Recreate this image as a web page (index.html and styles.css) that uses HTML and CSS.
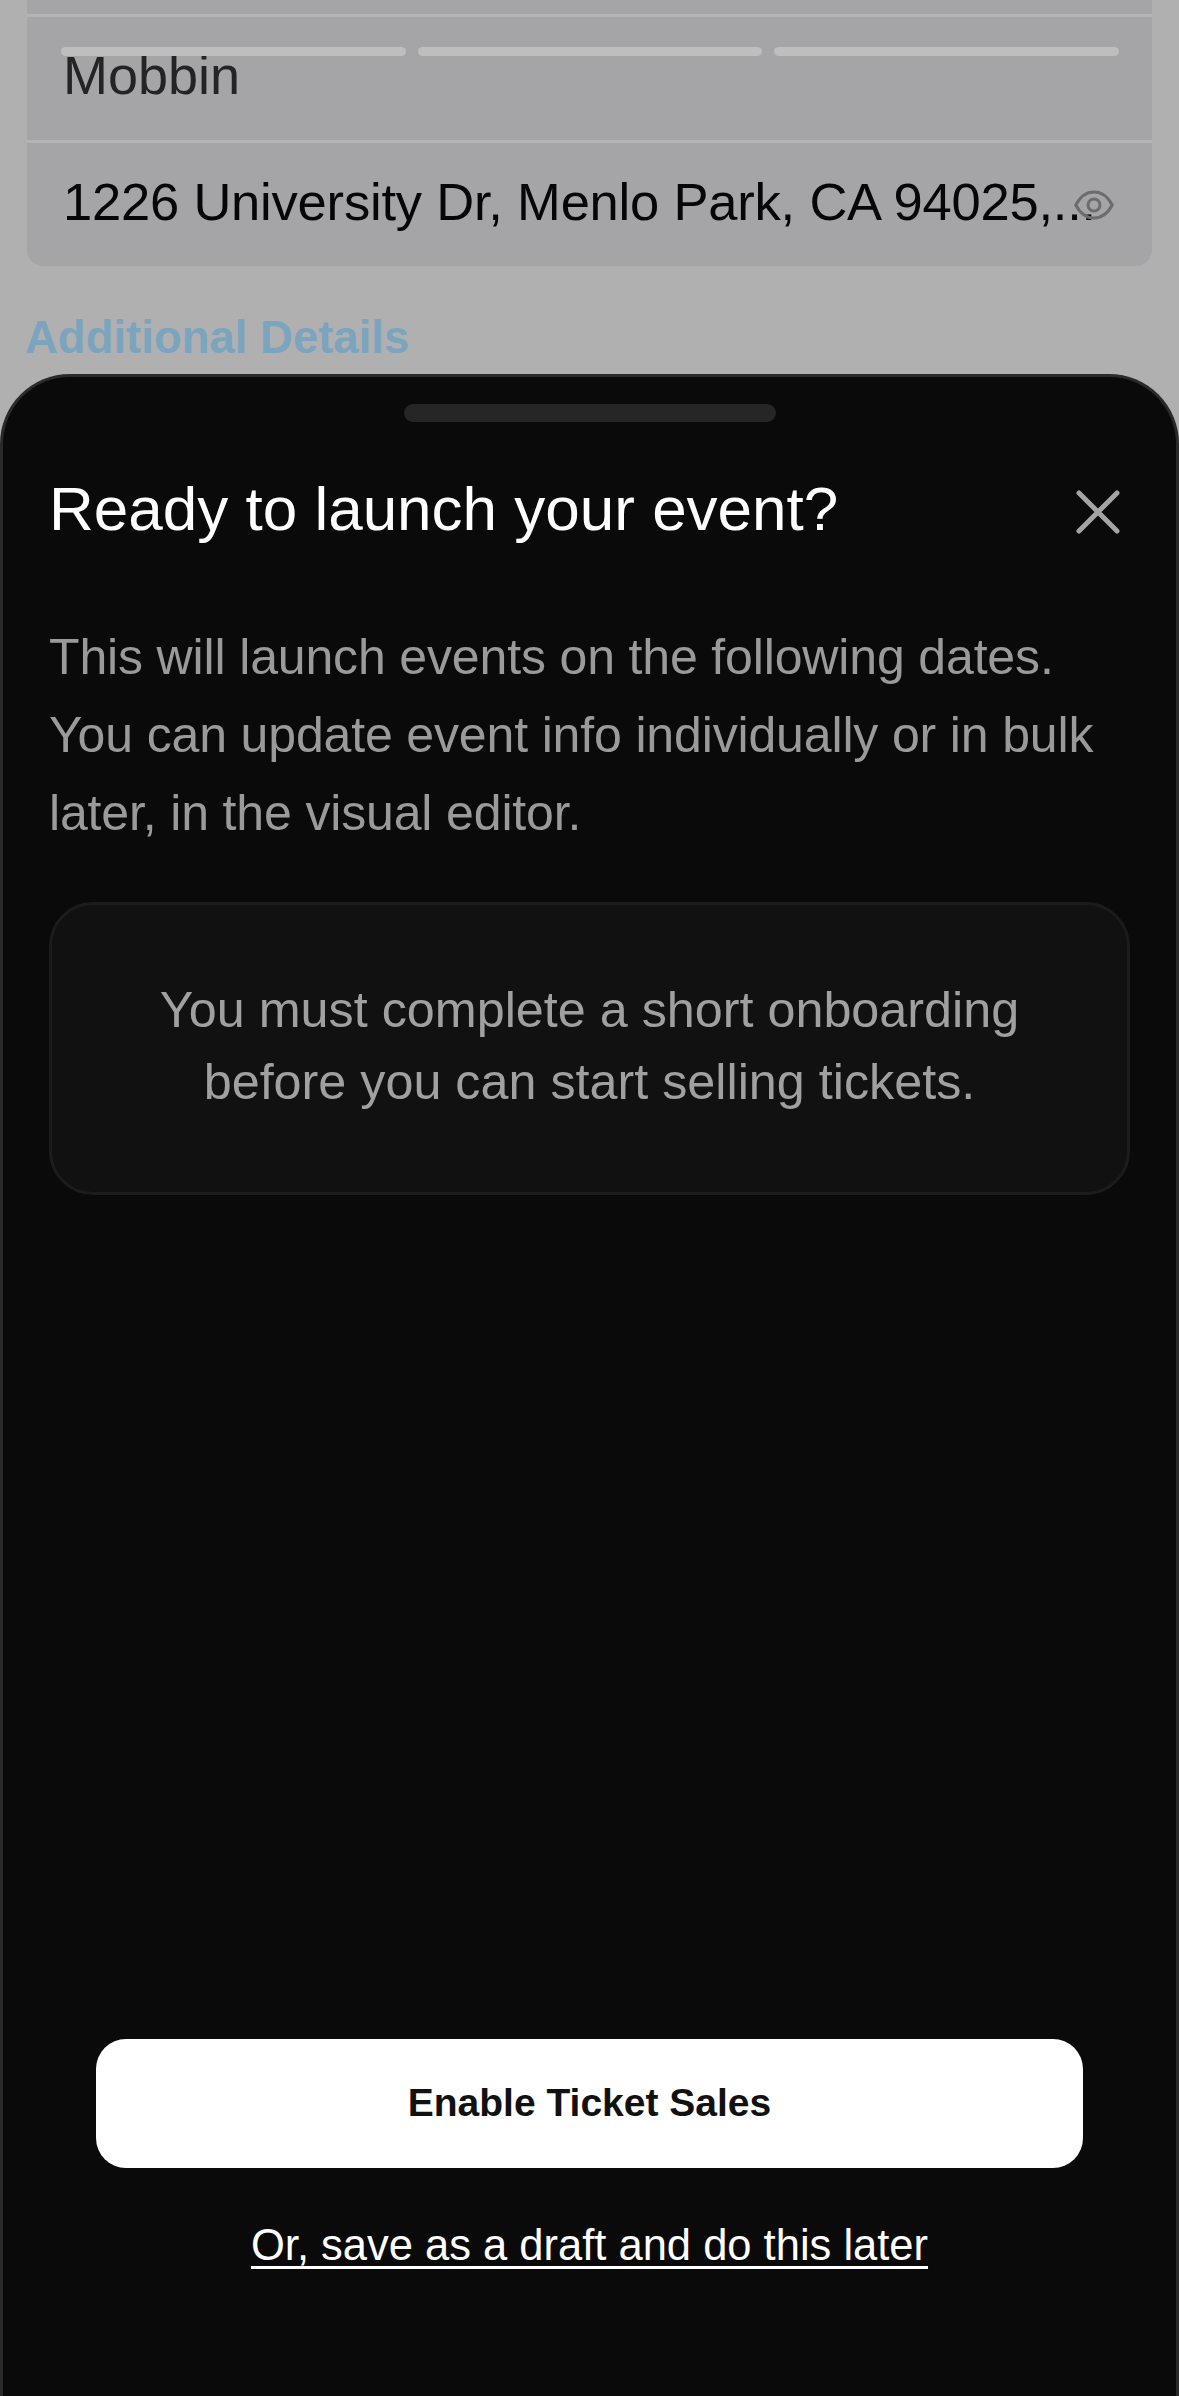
FILE: index.html
```html
<!DOCTYPE html>
<html lang="en">
<head>
<meta charset="utf-8">
<title>Ready to launch your event?</title>
<link rel="stylesheet" href="styles.css">
</head>
<body>
<div class="page">
  <div class="form">
    <div class="card">
      <div class="row row-top"></div>
      <div class="row row-name"><span class="name">Mobbin</span></div>
      <div class="row row-address">
        <span class="address">1226 University Dr, Menlo Park, CA 94025,...</span>
        <svg class="eye" viewBox="0 0 40 30" fill="none" stroke="#6c6c6d" stroke-width="3" aria-hidden="true">
          <path d="M1.8 15C6 7 12.500 2 20 2s14 5 18.200 13C34 23 27.500 28 20 28S6 23 1.800 15Z"/>
          <circle cx="20" cy="15" r="6"/>
        </svg>
      </div>
    </div>
    <h2 class="section">Additional Details</h2>
  </div>
  <div class="progress">
    <span class="bar"></span><span class="bar"></span><span class="bar"></span>
  </div>
  <section class="sheet">
    <div class="handle"></div>
    <header class="sheet-head">
      <h1 class="title">Ready to launch your event?</h1>
      <svg class="close" viewBox="0 0 44 44" fill="none" stroke="#a4a4a4" stroke-width="5" stroke-linecap="round" aria-hidden="true">
        <path d="M3 3l38 38M41 3L3 41"/>
      </svg>
    </header>
    <p class="lead">This will launch events on the following dates.<br>You can update event info individually or in bulk<br>later, in the visual editor.</p>
    <div class="notice"><span class="notice-text">You must complete a short onboarding<br>before you can start selling tickets.</span></div>
    <div class="actions">
      <button class="primary" type="button">Enable Ticket Sales</button>
      <a class="draft" href="#">Or, save as a draft and do this later</a>
    </div>
  </section>
</div>
</body>
</html>
```
FILE: styles.css
```css
* { box-sizing: border-box; }
html, body { margin: 0; padding: 0; }
body { font-family: "Liberation Sans", Arial, sans-serif; background: #b0b0b0; }
.page { position: relative; width: 1179px; height: 2396px; overflow: hidden; background: #b0b0b0; }
.form { padding: 0 27px; }
.card { background: #a5a5a7; border-radius: 0 0 16px 16px; }
.row { display: flex; align-items: center; padding: 0 36px; border-bottom: 3px solid #b4b4b5; }
.row:last-child { border-bottom: 0; }
.row-top { height: 17px; }
.row-name { height: 126px; padding-bottom: 7px; }
.row-address { height: 123px; position: relative; padding-bottom: 6px; }
.name { font-size: 54px; color: #242425; }
.address { font-size: 52.500px; letter-spacing: -0.2px; color: #060606; white-space: nowrap; }
.eye { position: absolute; left: 1047px; top: 47px; width: 40px; height: 30px; }
.section { margin: 47px 0 0 -2px; font-size: 45.500px; line-height: 50px; font-weight: 700; color: #7ba4bf; }
.progress { position: absolute; left: 61px; top: 47px; width: 1058px; display: flex; gap: 12px; }
.bar { flex: 1; height: 9px; border-radius: 5px; background: #bebebf; }
.sheet { position: absolute; left: 0; right: 0; top: 374px; bottom: 0; background: #0a0a0a; border: 3px solid #2a2a2a; border-bottom: 0; border-radius: 70px 70px 0 0; padding: 27px 46px 0; }
.handle { width: 372px; height: 18px; margin: 0 auto; border-radius: 9px; background: #262626; }
.sheet-head { display: flex; justify-content: space-between; align-items: center; margin-top: 47px; height: 80px; }
.title { margin: 0; font-size: 62px; line-height: 80px; font-weight: 400; color: #fff; }
.close { width: 44px; height: 44px; margin: 5px 10px 0 0; }
.lead { margin: 69px 0 0; font-size: 50px; letter-spacing: -0.15px; line-height: 78px; color: #9a9a9a; }
.notice { margin: 50px 0 0; width: 1081px; height: 293px; padding-bottom: 6px; display: flex; align-items: center; justify-content: center; text-align: center; background: #111; border: 3px solid #1c1c1c; border-radius: 44px; font-size: 50.300px; line-height: 72px; color: #a0a0a0; }
.actions { position: absolute; left: 93px; right: 93px; top: 1662px; display: flex; flex-direction: column; align-items: center; }
.primary { width: 100%; height: 129px; padding-bottom: 3px; border: 0; border-radius: 30px; background: #fff; color: #111; font-family: inherit; font-size: 39px; font-weight: 700; }
.draft { margin-top: 52px; font-size: 43.500px; line-height: 50px; color: #fff; text-decoration: underline; text-decoration-thickness: 3px; text-underline-offset: 6px; }
```
